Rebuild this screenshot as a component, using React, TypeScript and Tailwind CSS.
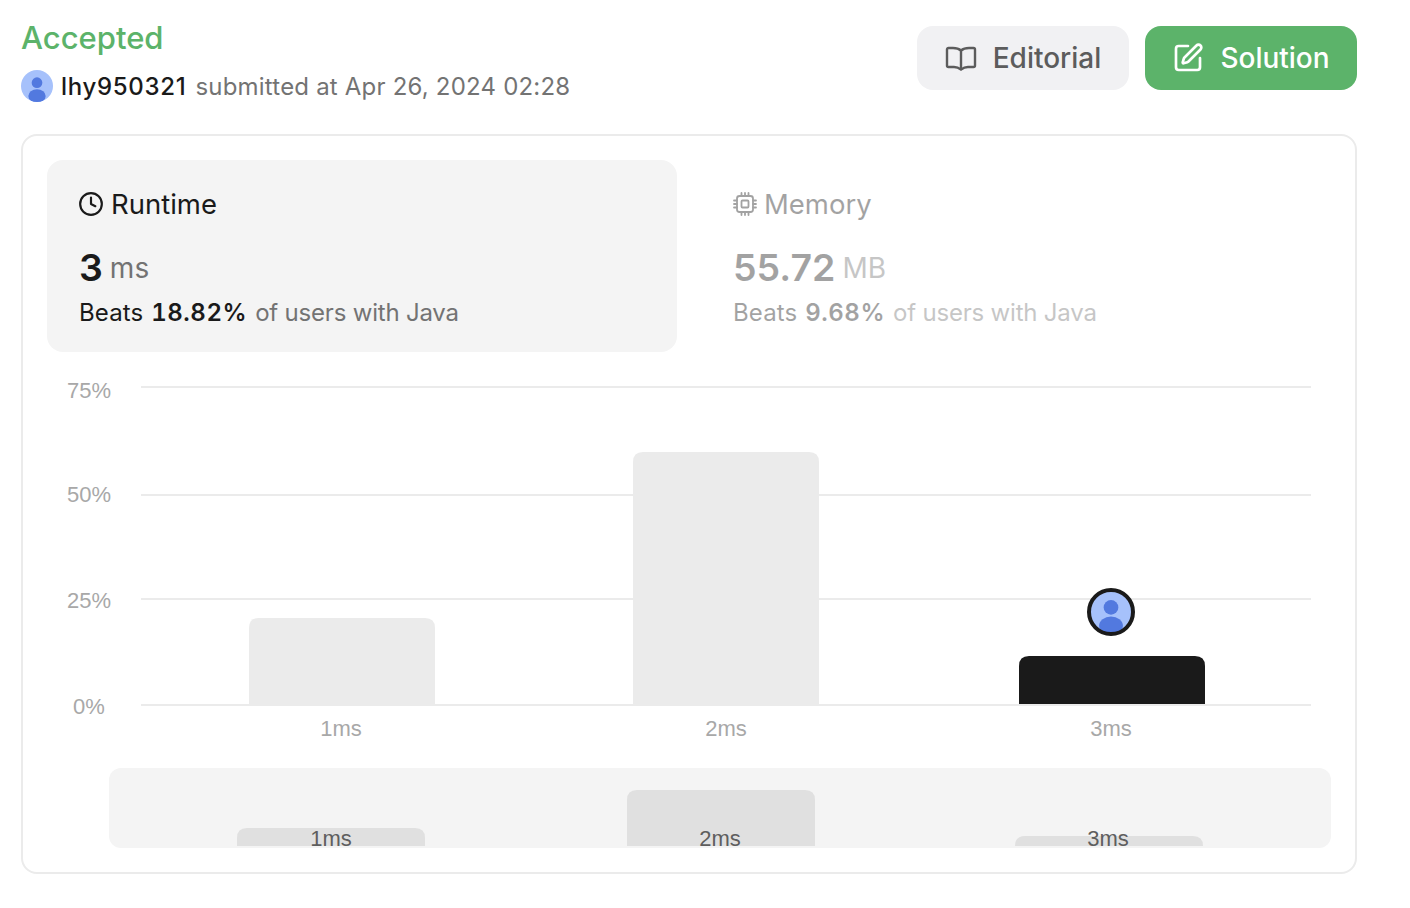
import React from 'react';
import { Clock, SquarePen } from 'lucide-react';

const chartFont = '"Liberation Sans", Arial, sans-serif';

const AvatarShape: React.FC = () => (
  <>
    <circle cx="24" cy="24" r="24" fill="#a6c1fb" />
    <clipPath id="avatar-clip">
      <circle cx="24" cy="24" r="24" />
    </clipPath>
    <g clipPath="url(#avatar-clip)" fill="#5279df">
      <circle cx="24" cy="19" r="8" />
      <ellipse cx="24" cy="39" rx="13" ry="10" />
    </g>
  </>
);

const BookIcon: React.FC = () => (
  <svg width="32" height="32" viewBox="0 0 32 32" fill="none" stroke="#5c5c5c" strokeWidth="2.4" strokeLinejoin="round" strokeLinecap="round">
    <path d="M16 8.500C14 6.800 11 6 8 6H3.500C2.700 6 2 6.700 2 7.500V23.500C2 24.300 2.700 25 3.500 25H9C11.500 25 13.500 25.600 16 27.500C18.500 25.600 20.500 25 23 25H28.500C29.300 25 30 24.300 30 23.500V7.500C30 6.700 29.300 6 28.500 6H24C21 6 18 6.800 16 8.500Z" />
    <path d="M16 8.500V27" />
  </svg>
);

const ChipIcon: React.FC = () => (
  <svg width="24" height="24" viewBox="0 0 24 24" fill="none" stroke="#1a1a1a" strokeWidth="1.8" strokeLinecap="round" strokeLinejoin="round">
    <rect x="4" y="4" width="16" height="16" rx="2.500" />
    <rect x="8.500" y="8.500" width="7" height="7" rx="1" />
    <path d="M8.500 1v3M12 1v3M15.500 1v3M8.500 20v3M12 20v3M15.500 20v3M1 8.500h3M1 12h3M1 15.500h3M20 8.500h3M20 12h3M20 15.500h3" />
  </svg>
);

const StatPanel: React.FC<{
  icon: React.ReactNode;
  title: string;
  value: string;
  unit: string;
  beats: string;
  active?: boolean;
}> = ({ icon, title, value, unit, beats, active }) => (
  <div className={active ? 'h-[192px] rounded-2xl bg-[#f4f4f4] px-8 pt-6' : 'h-[192px] rounded-2xl px-8 pt-6 opacity-40'}>
    <div className="flex h-10 items-center gap-[7px] text-[27.5px] text-[#1a1a1a]">
      {icon}
      <span className="mt-[2px]">{title}</span>
    </div>
    <div className="mt-[20px] flex h-12 items-center gap-[7px]">
      <span className="text-[37.5px] font-semibold text-[#1a1a1a]">{value}</span>
      <span className="text-[28px] text-[#737373]">{unit}</span>
    </div>
    <div className="mt-[3px] flex h-9 items-center gap-2 text-[24px] text-[#737373]">
      <span className="tracking-[0.1px] text-[#1a1a1a]">Beats</span>
      <span className="font-semibold tracking-[0.55px] text-[#1a1a1a] tabular-nums">{beats}</span>
      <span className="tracking-[-0.2px]">of users with Java</span>
    </div>
  </div>
);

const gridLines = [
  { label: '75%', y: 387, textX: 67, textY: 398 },
  { label: '50%', y: 495, textX: 67, textY: 502 },
  { label: '25%', y: 599, textX: 67, textY: 608 },
  { label: '0%', y: 705, textX: 73, textY: 714 },
];

const bars = [
  { label: '1ms', x: 249, y: 618, textX: 341 },
  { label: '2ms', x: 633, y: 452, textX: 726 },
  { label: '3ms', x: 1019, y: 656, textX: 1111, dark: true },
];

const brushBars = [
  { label: '1ms', x: 237, y: 828, textX: 331 },
  { label: '2ms', x: 627, y: 790, textX: 720 },
  { label: '3ms', x: 1015, y: 836, textX: 1108 },
];

const topRounded = (x: number, y: number, w: number, bottom: number, r: number) =>
  `M${x} ${bottom}V${y + r}Q${x} ${y} ${x + r} ${y}H${x + w - r}Q${x + w} ${y} ${x + w} ${y + r}V${bottom}Z`;

const Chart: React.FC = () => (
  <svg width="1284" height="496" viewBox="47 352 1284 496" className="block overflow-visible" fontFamily={chartFont} fontSize="22">
    {gridLines.map((g) => (
      <g key={g.label}>
        <line x1="141" x2="1311" y1={g.y} y2={g.y} stroke="#ebebeb" strokeWidth="2" />
        <text x={g.textX} y={g.textY} fill="#a8a8a8">{g.label}</text>
      </g>
    ))}
    {bars.map((b) => (
      <g key={b.label}>
        <path d={topRounded(b.x, b.y, 186, 704, 10)} fill={b.dark ? '#1a1a1a' : '#ebebeb'} />
        <text x={b.textX} y="736" fill="#a8a8a8" textAnchor="middle">{b.label}</text>
      </g>
    ))}
    <svg x="1089" y="590" width="44" height="44" viewBox="0 0 48 48">
      <AvatarShape />
    </svg>
    <circle cx="1111" cy="612" r="22" fill="none" stroke="#1a1a1a" strokeWidth="4" />
    <rect x="109" y="768" width="1222" height="80" rx="12" fill="#f4f4f4" />
    {brushBars.map((b) => (
      <g key={b.label}>
        <path d={topRounded(b.x, b.y, 188, 846, 10)} fill="#e0e0e0" />
        <text x={b.textX} y="846" fill="#5e5e5e" textAnchor="middle">{b.label}</text>
      </g>
    ))}
  </svg>
);

export default function App() {
  return (
    <div className="min-h-[908px] bg-white pl-[21px] pt-[20px] font-['Inter','Liberation_Sans',sans-serif]">
      <div className="w-[1336px]">
        <div className="flex h-[114px] items-start justify-between">
          <div className="flex flex-col">
            <div className="h-9 text-[31px] leading-9 font-medium text-[#5cb36a]">Accepted</div>
            <div className="mt-[14px] flex h-8 items-center gap-2">
              <svg width="32" height="32" viewBox="0 0 48 48">
                <AvatarShape />
              </svg>
              <span className="mt-[2px] text-[24px] font-medium tracking-[0.7px] text-[#1a1a1a]">lhy950321</span>
              <span className="mt-[2px] ml-px text-[24px] tracking-[0.2px] text-[#737373]">submitted at Apr 26, 2024 02:28</span>
            </div>
          </div>
          <div className="mt-[6px] flex gap-4">
            <button className="flex h-16 w-[212px] items-center justify-center gap-4 rounded-2xl bg-[#f1f1f3] text-[28px] font-medium text-[#5c5c5c]">
              <BookIcon />
              Editorial
            </button>
            <button className="flex h-16 w-[212px] items-center justify-center gap-4 rounded-2xl bg-[#5cb36a] text-[28px] font-medium text-white">
              <SquarePen size={32} strokeWidth={2} />
              Solution
            </button>
          </div>
        </div>
        <div className="h-[740px] rounded-2xl border-2 border-[#ebebeb] px-6 pt-6">
          <div className="grid grid-cols-2 gap-6">
            <StatPanel active icon={<span className="-ml-px"><Clock size={26} strokeWidth={2} /></span>} title="Runtime" value="3" unit="ms" beats="18.82%" />
            <StatPanel icon={<ChipIcon />} title="Memory" value="55.72" unit="MB" beats="9.68%" />
          </div>
          <Chart />
        </div>
      </div>
    </div>
  );
}
